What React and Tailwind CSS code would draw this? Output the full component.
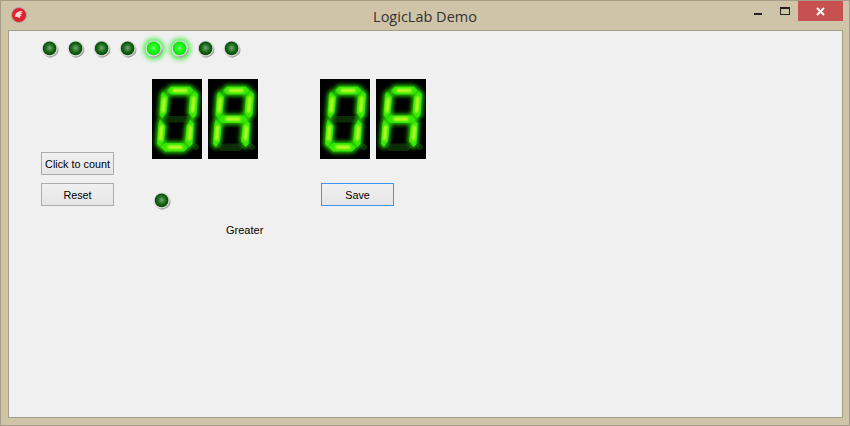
import React, { useId } from 'react';

const SEGMENTS = {
  top: '15.5,11.5 19,8 38,8 41,11.5 37.5,15 19,15',
  upperLeft: '11,13.5 15.5,18 14,33.5 10.5,38.5 8,36 9.5,16',
  upperRight: '43,12.5 45.5,15.5 44,36 41,39 37,34 38.5,17.5',
  middle: '11,40 14.5,37 36,37 39,40 36,43.5 14.5,43.5',
  lowerLeft: '8,41.5 10.5,44 13,47 11.5,62 8,67.5 5.5,65 7,45',
  lowerRight: '38.5,41.5 41.5,44.5 40,65 37.5,67.5 33.5,62 35,47',
  bottom: '13,64.5 31,64.5 35.5,68.5 32,72 13,72 9,68',
};

// bright centre line of each segment
const CORES = {
  top: 'M22 11.5 H34',
  upperLeft: 'M12.2 20 L11 32',
  upperRight: 'M41.8 19 L40.6 32',
  middle: 'M19 40 H31',
  lowerLeft: 'M9.6 48 L8.6 60',
  lowerRight: 'M38.4 48 L37.4 60',
  bottom: 'M17 68.2 H29',
};

const Digit = ({ on }) => {
  const id = useId();
  return (
    <svg width="50" height="80" viewBox="0 0 50 80" className="block bg-black">
      <defs>
        <filter id={`${id}glow`} x="-30%" y="-30%" width="160%" height="160%">
          <feGaussianBlur stdDeviation="2.2" />
        </filter>
        <filter id={`${id}core`} x="-30%" y="-30%" width="160%" height="160%">
          <feGaussianBlur stdDeviation="1" />
        </filter>
      </defs>
      {Object.keys(SEGMENTS).filter(k => !on.includes(k)).map(k => (
        <polygon key={k} points={SEGMENTS[k]} fill="#0b2c05" />
      ))}
      <circle cx="44" cy="68" r="3" fill="#0b2c05" />
      <g filter={`url(#${id}glow)`}>
        {on.map(k => <polygon key={k} points={SEGMENTS[k]} fill="#28d000" stroke="#28d000" strokeWidth="4" />)}
      </g>
      {on.map(k => <polygon key={k} points={SEGMENTS[k]} fill="#34e800" stroke="#34e800" strokeWidth="0.8" />)}
      <g filter={`url(#${id}core)`}>
        {on.map(k => <path key={k} d={CORES[k]} stroke="#c4ff2c" strokeWidth="3.4" strokeLinecap="round" fill="none" />)}
      </g>
    </svg>
  );
};

const Led = ({ lit }) => {
  const id = useId();
  return (
    <svg width="18" height="18" viewBox="0 0 18 18" className="block overflow-visible">
      <defs>
        <radialGradient id={`${id}ball`} cx="50%" cy="47%" r="55%">
          <stop offset="0%" stopColor={lit ? '#80ff80' : '#7aa87a'} />
          <stop offset="30%" stopColor={lit ? '#30fa30' : '#3f843f'} />
          <stop offset="70%" stopColor={lit ? '#10ee10' : '#0d5a0d'} />
          <stop offset="100%" stopColor={lit ? '#0ade0a' : '#064c06'} />
        </radialGradient>
        <filter id={`${id}halo`} x="-60%" y="-60%" width="220%" height="220%">
          <feGaussianBlur stdDeviation="2.2" />
        </filter>
      </defs>
      {lit && <circle cx="9" cy="9" r="11" fill="#44ee44" opacity="0.85" filter={`url(#${id}halo)`} />}
      <circle cx="9" cy="9" r="8.5" fill="#dadada" />
      <path d="M16.8 6.5 A8 8 0 0 1 4.5 15.8 A9 9 0 0 0 16.8 6.5Z" fill="#a4a4a4" />
      <circle cx="8.6" cy="8.4" r="6.8" fill={`url(#${id}ball)`} />
    </svg>
  );
};

const Btn = ({ children, focused }) => (
  <button
    className={`w-[73px] h-[23px] pt-[1px] border-[1px] bg-gradient-to-b from-[#f0f0f0] to-[#e5e5e5] text-[10.8px] leading-none text-black font-['Liberation_Sans',sans-serif] ${focused ? 'border-[#3c95ee]' : 'border-[#acacac]'}`}
  >
    {children}
  </button>
);

export default function App() {
  const leds = [0, 0, 0, 0, 1, 1, 0, 0];
  return (
    <div className="w-[850px] h-[426px] flex flex-col bg-[#cfc3a8] border border-[#a69d87] overflow-hidden font-['Open_Sans',sans-serif]">
      {/* title bar */}
      <div className="h-[29px] shrink-0 flex items-start">
        <div className="w-[119px]">
          <svg width="16" height="16" viewBox="0 0 16 16" className="ml-[10px] mt-[6px]">
            <circle cx="8" cy="8" r="7.5" fill="#e0222c" stroke="#a8a8a8" />
            <path d="M4 10 C4 6 7 3.5 12 4 L9.5 5.5 L12 6 L9 7.5 L11 9 L8.5 9.5 L9.5 12 C7.5 10.5 6 9.5 4 10Z" fill="#fbdada" />
          </svg>
        </div>
        <div className="flex-1 text-center text-[14.5px] leading-[29px] text-[#333] pt-[1px]">LogicLab Demo</div>
        <div className="w-[119px] flex items-start justify-end">
          <div className="w-[8px] h-[2px] bg-[#222] mt-[12px] mr-[18px]" />
          <div className="w-[10px] h-[8px] border border-[#222] border-t-[2px] mt-[6px] mr-[8px]" />
          <div className="w-[45px] h-[20px] bg-[#c75050] flex items-center justify-center mr-[6px] text-white">
            <svg width="9" height="9" viewBox="0 0 9 9">
              <path d="M1 1 L8 8 M8 1 L1 8" stroke="#fff" strokeWidth="2" />
            </svg>
          </div>
        </div>
      </div>

      {/* client area */}
      <div className="ml-[7px] mr-[6px] h-[388px] border border-[#a69d87] bg-[#f0f0f0] pt-[9px]">
        <div className="flex gap-[8px] ml-[32px]">
          {leds.map((lit, i) => <Led key={i} lit={!!lit} />)}
        </div>

        <div className="flex mt-[21px] ml-[32px]">
          <div className="flex flex-col gap-[8px] pt-[73px]">
            <Btn>Click to count</Btn>
            <Btn>Reset</Btn>
          </div>

          <div className="ml-[38px]">
            <div className="flex">
              <div className="flex gap-[6px]">
                <Digit on={['top', 'upperLeft', 'upperRight', 'lowerLeft', 'lowerRight', 'bottom']} />
                <Digit on={['top', 'upperLeft', 'upperRight', 'middle', 'lowerLeft', 'lowerRight']} />
              </div>
              <div className="flex gap-[6px] ml-[62px]">
                <Digit on={['top', 'upperLeft', 'upperRight', 'lowerLeft', 'lowerRight', 'bottom']} />
                <Digit on={['top', 'upperLeft', 'upperRight', 'middle', 'lowerLeft', 'lowerRight']} />
              </div>
            </div>
            <div className="flex items-start mt-[24px]">
              <div className="mt-[9px] ml-[1px]"><Led /></div>
              <div className="ml-[150px] -mt-[2px]"><Btn focused>Save</Btn></div>
            </div>
            <div className="ml-[74px] mt-[13px] text-[11px] leading-[15px] text-black font-['Liberation_Sans',sans-serif]">Greater</div>
          </div>
        </div>
      </div>
    </div>
  );
}
